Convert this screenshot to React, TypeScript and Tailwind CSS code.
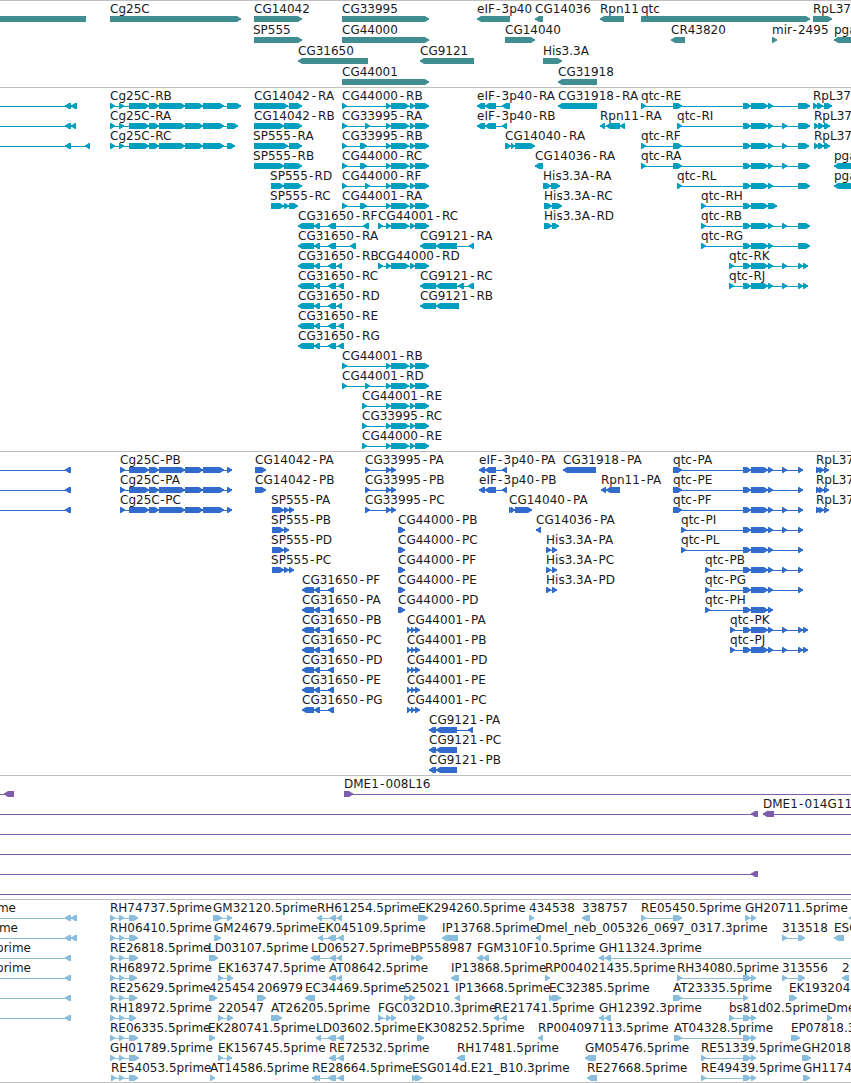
type Segment = [number, number];
type Feature = {
  label?: string;
  x: number;
  dir: 1 | -1;
  parts: Segment[];
  from?: number;
  to?: number;
  anchorEnd?: number;
};
type Track = {
  name: string;
  height: string;
  color: string;
  barTop: number;
  pitch: number;
  labelGap: number;
  rows: Feature[][];
};

const VIEW = 851;

/** "641-646 673-682" -> [[641, 646], [673, 682]] */
const seg = (s: string): Segment[] =>
  s
    .split(" ")
    .filter(Boolean)
    .map((p) => p.split("-").map(Number) as Segment);

const R = (label: string, x: number, parts: string): Feature => ({ label, x, dir: 1, parts: seg(parts) });
const L = (label: string, x: number, parts: string): Feature => ({ label, x, dir: -1, parts: seg(parts) });
/** Feature that enters from beyond the left edge. */
const inL = (parts: string, label?: string, anchorEnd?: number): Feature => ({
  label,
  anchorEnd,
  x: 0,
  dir: -1,
  parts: seg(parts),
  from: -6,
});

const COL = "129-149 149-159 159-185 185-203 203-224";
const CG = "386-391 391-409 410-415 415-429";
const Q = "743-751 751-768 768-773";
const LG = "298-314 314-320 328-336";
const LP = "302-314 314-320 328-334";

const genes: Feature[][] = [
  [
    { x: 0, dir: -1, parts: [[-10, 86]] },
    R("Cg25C", 110, "110-241"),
    R("CG14042", 254, "254-302"),
    R("CG33995", 342, "342-429"),
    L("eIF-3p40", 477, "477-510"),
    L("CG14036", 535, "535-543"),
    L("Rpn11", 600, "600-624"),
    R("qtc", 641, "641-810"),
    R("RpL37", 813, "813-832"),
  ],
  [
    R("SP555", 253, "254-302"),
    R("CG44000", 342, "342-429"),
    R("CG14040", 505, "505-535"),
    L("CR43820", 671, "671-685"),
    R("mir-2495", 772, "772-777"),
    L("pga", 834, "834-862"),
  ],
  [L("CG31650", 298, "298-368"), L("CG9121", 420, "420-474"), R("His3.3A", 543, "543-562")],
  [R("CG44001", 342, "342-429"), L("CG31918", 558, "558-597")],
];

const transcripts: Feature[][] = [
  [
    inL("65-71 71-77"),
    R("Cg25C-RB", 110, `110-115 119-124 ${COL} 227-241`),
    R("CG14042-RA", 254, "254-288 289-302"),
    R("CG44000-RB", 342, `342-347 ${CG}`),
    L("eIF-3p40-RA", 477, "477-485 485-496 502-510"),
    L("CG31918-RA", 558, "558-597"),
    R("qtc-RE", 641, `641-646 673-682 ${Q} 798-810`),
    R("RpL37", 813, "813-818 817-823 824-832"),
  ],
  [
    inL("65-71 71-76"),
    R("Cg25C-RA", 110, `110-115 119-124 ${COL} 227-238`),
    R("CG14042-RB", 254, "254-284 284-302"),
    R("CG33995-RA", 342, `342-347 365-370 ${CG}`),
    L("eIF-3p40-RB", 477, "477-485 485-496 502-507"),
    L("Rpn11-RA", 600, "600-605 606-620 620-625"),
    R("qtc-RI", 677, `677-682 ${Q} 782-787 798-810`),
    R("RpL37", 814, "814-819 818-824 824-830"),
  ],
  [
    inL("65-71 85-90"),
    R("Cg25C-RC", 110, `110-115 119-124 ${COL} 227-235`),
    R("SP555-RA", 253, "254-288 289-302"),
    R("CG33995-RB", 342, `342-347 360-367 ${CG}`),
    R("CG14040-RA", 505, "505-511 511-515 515-535"),
    R("qtc-RF", 641, `641-646 673-682 ${Q} 782-787 798-809`),
    R("RpL37", 814, "814-819 818-824 824-830"),
  ],
  [
    R("SP555-RB", 253, "254-284 284-302"),
    R("CG44000-RC", 342, `342-347 360-367 ${CG}`),
    L("CG14036-RA", 535, "535-543"),
    R("qtc-RA", 641, `641-646 673-682 ${Q} 782-787 798-810`),
    L("pga", 834, "834-862"),
  ],
  [
    R("SP555-RD", 270, "271-284 284-302"),
    R("CG44000-RF", 342, `342-347 365-370 ${CG}`),
    R("His3.3A-RA", 543, "543-551 551-560"),
    R("qtc-RL", 677, `677-682 ${Q} 798-810`),
    L("pga", 834, "834-862"),
  ],
  [
    R("SP555-RC", 270, "271-284 284-289 289-298"),
    R("CG44001-RA", 342, `342-347 360-367 ${CG}`),
    R("His3.3A-RC", 544, "544-552 552-562"),
    R("qtc-RH", 701, "701-706 743-751 751-768 768-777"),
  ],
  [
    L("CG31650-RF", 298, `${LG} 363-369`),
    R("CG44001-RC", 378, `378-383 ${CG}`),
    R("His3.3A-RD", 544, "544-552 552-559"),
    R("qtc-RB", 701, `701-706 ${Q} 782-787 798-810`),
  ],
  [
    L("CG31650-RA", 298, `${LG} 350-356`),
    L("CG9121-RA", 420, "420-436 436-457 469-474"),
    R("qtc-RG", 701, `701-706 ${Q} 798-810`),
  ],
  [
    L("CG31650-RB", 298, `${LG} 337-342`),
    R("CG44000-RD", 378, `378-383 ${CG}`),
    R("qtc-RK", 729, `729-734 ${Q} 782-787 798-803 803-808`),
  ],
  [
    L("CG31650-RC", 298, `${LG} 338-344`),
    L("CG9121-RC", 420, "420-436 436-457 458-464 468-474"),
    R("qtc-RJ", 729, `729-734 ${Q} 782-787 798-803 803-808`),
  ],
  [L("CG31650-RD", 298, `${LG} 337-342`), L("CG9121-RB", 420, "420-436 436-459")],
  [L("CG31650-RE", 298, `${LG} 338-344`)],
  [L("CG31650-RG", 298, `${LG} 338-344`)],
  [R("CG44001-RB", 342, `342-347 ${CG}`)],
  [R("CG44001-RD", 342, `342-347 365-370 ${CG}`)],
  [R("CG44001-RE", 362, `362-367 ${CG}`)],
  [R("CG33995-RC", 362, `362-367 ${CG}`)],
  [R("CG44000-RE", 362, `362-367 ${CG}`)],
];

const cds: Feature[][] = [
  [
    inL("65-71"),
    R("Cg25C-PB", 120, `120-125 ${COL} 227-232`),
    R("CG14042-PA", 255, "255-266"),
    R("CG33995-PA", 365, "365-370 386-391 391-396"),
    L("eIF-3p40-PA", 479, "479-485 485-496 502-507"),
    L("CG31918-PA", 563, "563-596"),
    R("qtc-PA", 673, `673-682 ${Q} 782-787 798-803`),
    R("RpL37", 816, "816-821 819-824 824-829"),
  ],
  [
    inL("65-71"),
    R("Cg25C-PA", 120, `120-125 ${COL} 227-232`),
    R("CG14042-PB", 255, "255-266"),
    R("CG33995-PB", 365, "365-370 386-391 391-396"),
    L("eIF-3p40-PB", 479, "479-485 485-496 502-507"),
    L("Rpn11-PA", 601, "601-606 606-620"),
    R("qtc-PE", 673, `673-682 ${Q} 798-803`),
    R("RpL37", 816, "816-821 819-824 824-829"),
  ],
  [
    inL("65-71"),
    R("Cg25C-PC", 120, `120-125 ${COL} 227-232`),
    R("SP555-PA", 271, "272-284 284-289 289-294"),
    R("CG33995-PC", 365, "365-370 386-391 391-396"),
    R("CG14040-PA", 509, "509-513 511-515 515-532"),
    R("qtc-PF", 673, `673-682 ${Q} 782-787 798-803`),
    R("RpL37", 816, "816-821 819-824 824-829"),
  ],
  [
    R("SP555-PB", 271, "272-284 284-289"),
    R("CG44000-PB", 398, "398-405"),
    L("CG14036-PA", 536, "536-541"),
    R("qtc-PI", 681, `681-686 ${Q} 782-787 798-803`),
  ],
  [
    R("SP555-PD", 271, "272-284 284-289"),
    R("CG44000-PC", 398, "398-405"),
    R("His3.3A-PA", 546, "546-551 552-557"),
    R("qtc-PL", 681, `681-686 ${Q} 798-803`),
  ],
  [
    R("SP555-PC", 271, "272-284 284-289 289-294"),
    R("CG44000-PF", 398, "398-405"),
    R("His3.3A-PC", 546, "546-551 552-557"),
    R("qtc-PB", 705, `705-710 ${Q} 782-787 798-803`),
  ],
  [
    L("CG31650-PF", 302, LP),
    R("CG44000-PE", 398, "398-405"),
    R("His3.3A-PD", 546, "546-551 552-557"),
    R("qtc-PG", 705, `705-710 ${Q} 798-803`),
  ],
  [L("CG31650-PA", 302, LP), R("CG44000-PD", 398, "398-405"), R("qtc-PH", 705, `705-710 ${Q}`)],
  [
    L("CG31650-PB", 302, LP),
    R("CG44001-PA", 407, "407-411 411-415 415-420"),
    R("qtc-PK", 730, `730-735 ${Q} 782-787 798-803 803-808`),
  ],
  [
    L("CG31650-PC", 302, LP),
    R("CG44001-PB", 407, "407-411 411-415 415-420"),
    R("qtc-PJ", 730, `730-735 ${Q} 782-787 798-803 803-808`),
  ],
  [L("CG31650-PD", 302, LP), R("CG44001-PD", 407, "407-411 411-415 415-420")],
  [L("CG31650-PE", 302, LP), R("CG44001-PE", 407, "407-411 411-415 415-420")],
  [L("CG31650-PG", 302, LP), R("CG44001-PC", 407, "407-411 411-415 415-420")],
  [L("CG9121-PA", 429, "429-436 436-457 468-473")],
  [L("CG9121-PC", 429, "429-436 436-457")],
  [L("CG9121-PB", 429, "429-436 436-457")],
];

const full: Feature = { x: 0, dir: 1, parts: [], from: -1, to: VIEW };

const bacs: Feature[][] = [
  [inL("4-14"), { ...R("DME1-008L16", 344, "344-353"), to: VIEW }],
  [inL("751-758"), { ...L("DME1-014G11", 763, "763-774"), to: VIEW }],
  [full],
  [full],
  [inL("751-758")],
  [full],
];

const ests: Feature[][] = [
  [
    inL("65-71 71-77", "me", 16),
    R("RH74737.5prime", 110, "110-115 119-124 129-138"),
    R("GM32120.5prime", 213, "213-222 227-232"),
    L("RH61254.5prime", 317, "317-322 330-336 337-342"),
    R("EK294260.5prime", 418, "418-428"),
    R("434538", 529, "529-534"),
    L("338757", 582, "582-590"),
    R("RE05450.5prime", 641, "641-646 673-682"),
    R("GH20711.5prime", 745, "745-750 751-756"),
    L("", 849, "849-855"),
  ],
  [
    inL("65-71 71-77", "me", 18),
    R("RH06410.5prime", 110, "110-115 119-124 129-138"),
    R("GM24679.5prime", 214, "214-221"),
    L("EK045109.5prime", 318, "318-323 328-336 338-344"),
    L("IP13768.5prime", 442, "442-458"),
    L("Dmel_neb_005326_0697_0317.3prime", 536, "536-541"),
    R("313518", 782, "782-787 798-805"),
    L("ESG", 834, "834-844"),
  ],
  [
    inL("65-71", "prime", 31),
    R("RE26818.5prime", 110, "110-115 119-124 129-138"),
    R("LD03107.5prime", 208, "209-218"),
    L("LD06527.5prime", 311, "311-316 314-320 330-336 337-342"),
    R("BP558987", 411, "411-416 416-423"),
    L("FGM310F10.5prime", 477, "477-483 483-489"),
    { ...L("GH11324.3prime", 599, "599-604 605-611"), to: VIEW },
  ],
  [
    inL("65-71", "prime", 31),
    R("RH68972.5prime", 110, "110-115 119-124 129-137"),
    R("EK163747.5prime", 218, "218-223 227-233"),
    L("AT08642.5prime", 329, "329-336 337-342"),
    L("IP13868.5prime", 451, "451-459"),
    R("RP004021435.5prime", 545, "545-550"),
    R("RH34080.5prime", 677, "677-682 743-751 751-756"),
    R("313556", 782, "782-787 798-805"),
    L("2", 842, "842-849"),
  ],
  [
    inL("65-71"),
    R("RE25629.5prime", 110, "110-115 119-124 129-137"),
    R("425454", 209, "209-217"),
    R("206979", 257, "257-266"),
    L("EC34469.5prime", 305, "305-315"),
    R("525021", 404, "404-409 409-415"),
    L("IP13668.5prime", 455, "455-460"),
    R("EC32385.5prime", 549, "549-554 552-561"),
    R("AT23335.5prime", 673, "673-682 743-748"),
    R("EK193204", 789, "789-797"),
  ],
  [
    inL("65-71"),
    R("RH18972.5prime", 110, "110-115 119-124 129-136"),
    R("220547", 218, "218-223 227-233"),
    R("AT26205.5prime", 271, "271-282"),
    R("FGC032D10.3prime", 378, "378-383 386-391 391-396"),
    L("RE21741.5prime", 494, "494-499 502-507"),
    L("GH12392.3prime", 599, "599-604 605-611"),
    R("bs81d02.5prime", 729, "729-734 743-751 751-756"),
    R("Dme", 827, "827-832"),
  ],
  [
    R("RE06335.5prime", 110, "110-115 119-124 129-138"),
    R("EK280741.5prime", 208, "209-215"),
    L("LD03602.5prime", 316, "316-321 328-336 338-344"),
    R("EK308252.5prime", 417, "417-424"),
    L("RP004097113.5prime", 538, "538-543"),
    R("AT04328.5prime", 674, "674-682 743-751 751-756"),
    R("EP07818.3", 791, "791-800"),
  ],
  [
    R("GH01789.5prime", 110, "110-115 119-124 129-139"),
    R("EK156745.5prime", 218, "218-223 227-232"),
    L("RE72532.5prime", 329, "329-336 338-344"),
    L("RH17481.5prime", 457, "457-465"),
    L("GM05476.5prime", 585, "585-596"),
    R("RE51339.5prime", 701, "701-706 743-751 751-756"),
    R("GH2018", 802, "802-811"),
  ],
  [
    R("RE54053.5prime", 111, "111-116 119-124 129-138"),
    R("AT14586.5prime", 210, "210-215"),
    L("RE28664.5prime", 312, "312-317 315-320 328-336 338-344"),
    R("ESG014d.E21_B10.3prime", 412, "412-417 415-422"),
    L("RE27668.5prime", 587, "587-597"),
    R("RE49439.5prime", 701, "701-706 743-751 751-756"),
    R("GH1174", 803, "803-810"),
  ],
];

const tracks: Track[] = [
  { name: "genes", height: "h-[87px]", color: "#418e92", barTop: 15, pitch: 21, labelGap: 3, rows: genes },
  { name: "transcripts", height: "h-[364px]", color: "#009ebf", barTop: 15, pitch: 20, labelGap: 3, rows: transcripts },
  { name: "cds", height: "h-[324px]", color: "#316ccc", barTop: 15, pitch: 20, labelGap: 3, rows: cds },
  { name: "bacs", height: "h-[124px]", color: "#7c5cab", barTop: 15, pitch: 20, labelGap: 3, rows: bacs },
  { name: "ests", height: "h-[183px]", color: "#89bdde", barTop: 15, pitch: 20, labelGap: 3, rows: ests },
];

/** Exon box whose last five pixels taper to a blunt point. */
function arrow([s, e]: Segment, dir: 1 | -1, y: number) {
  const head = Math.min(5, e - s);
  const tip = dir === 1 ? e : s;
  const tail = dir === 1 ? s : e;
  const at = (back: number) => tip - dir * back;
  return (
    `M${tail} ${y}H${at(head - 1)}L${at(2)} ${y + 1.2}L${at(1)} ${y + 2}H${tip}V${y + 4}` +
    `H${at(1)}L${at(2)} ${y + 4.8}L${at(head - 1)} ${y + 6}H${tail}Z`
  );
}

/** Widens the space on both sides of every hyphen in a label. */
function spacing(label: string) {
  const pad = label.startsWith("CG") ? 1.9 : /^(qtc|Cg)/.test(label) ? 0.6 : 1.2;
  return label
    .split("")
    .map((c, i) => (c === "-" || label[i - 1] === "-" ? pad : 0))
    .join(" ");
}

function Glyph({ f, y, gap, color }: { f: Feature; y: number; gap: number; color: string }) {
  const from = f.from ?? f.parts[0][0];
  const to = f.to ?? f.parts[f.parts.length - 1][1];
  const line = f.parts.length !== 1 || f.from !== undefined || f.to !== undefined;
  return (
    <g>
      {line && <rect x={from} y={y + 3} width={to - from} height={1} fill={color} shapeRendering="crispEdges" />}
      {f.parts.length > 0 && <path d={f.parts.map((p) => arrow(p, f.dir, y)).join("")} fill={color} />}
      {f.label && (
        <text
          x={f.anchorEnd ?? f.x}
          y={y - gap}
          textAnchor={f.anchorEnd ? "end" : "start"}
          dx={f.label.includes("-") ? spacing(f.label) : undefined}
        >
          {f.label}
        </text>
      )}
    </g>
  );
}

export default function App() {
  return (
    <main className="flex h-[1083px] w-[851px] flex-col overflow-hidden border-b border-[#c0c0c0] bg-white">
      {tracks.map((t) => (
        <section key={t.name} className={`${t.height} shrink-0 overflow-hidden border-t border-[#c0c0c0]`}>
          <svg
            className="block h-full w-full fill-[#1a1a1a] font-['DejaVu_Sans',sans-serif] text-[12px]"
            aria-label={t.name}
          >
            {t.rows.map((row, r) =>
              row.map((f, i) => (
                <Glyph key={`${r}-${i}`} f={f} y={t.barTop + r * t.pitch} gap={t.labelGap} color={t.color} />
              )),
            )}
          </svg>
        </section>
      ))}
    </main>
  );
}
